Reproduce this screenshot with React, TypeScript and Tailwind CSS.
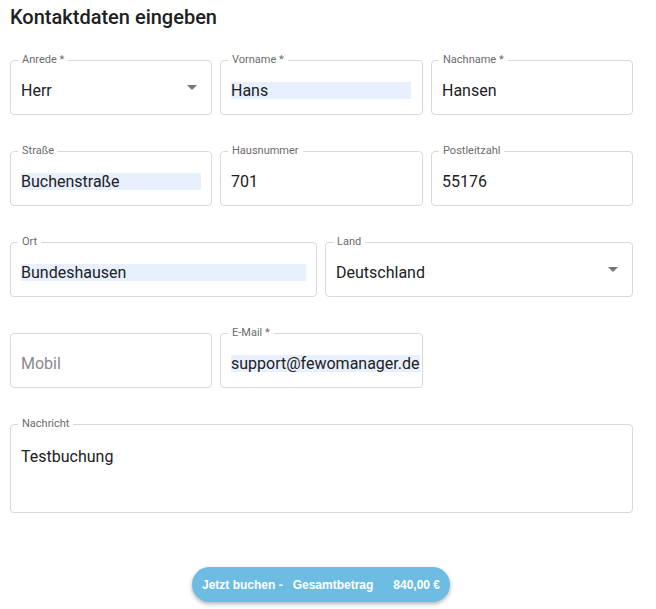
import React from "react";

function Field({ label, value, w, highlight, placeholder, select, hlw }: { label?: string; value?: string; w: string; highlight?: boolean; placeholder?: string; select?: boolean; hlw?: string }) {
  return (
    <div className={`relative h-[55px] ${w} rounded-[4px] border border-[#d9d9d9] flex items-center px-[10px] pt-[6px]`}>
      {label && (
        <span className="absolute -top-[8px] left-[7px] bg-white px-[4px] text-[11px] leading-[14px] text-[#6b6b6b]">{label}</span>
      )}
      {placeholder ? (
        <span className="text-[16px] text-[#8a8a8a]">{placeholder}</span>
      ) : (
        <span className={`text-[16px] leading-[17px] text-[#212121] ${highlight ? "bg-[#e8f0fe]" : ""} ${hlw ?? ""}`}>{value}</span>
      )}
      {select && (
        <span className="absolute right-[14px] top-[24px] w-0 h-0 border-l-[5px] border-r-[5px] border-t-[5px] border-l-transparent border-r-transparent border-t-[#757575]" />
      )}
    </div>
  );
}

export default function App() {
  return (
    <div className="w-[656px] h-[609px] bg-white font-[Roboto,sans-serif] px-[10px] relative">
      <h1 className="pt-[5px] text-[20px] leading-[24px] font-medium text-[#212121]">Kontaktdaten eingeben</h1>
      <div className="mt-[31px] flex flex-col gap-[36px]">
        <div className="flex gap-[8px]">
          <Field w="w-[202px]" label="Anrede *" value="Herr" select />
          <Field w="w-[203px]" label="Vorname *" value="Hans" highlight hlw="w-[180px]" />
          <Field w="w-[202px]" label="Nachname *" value="Hansen" />
        </div>
        <div className="flex gap-[8px]">
          <Field w="w-[202px]" label="Straße" value="Buchenstraße" highlight hlw="w-[180px]" />
          <Field w="w-[203px]" label="Hausnummer" value="701" />
          <Field w="w-[202px]" label="Postleitzahl" value="55176" />
        </div>
        <div className="flex gap-[8px]">
          <Field w="w-[307px]" label="Ort" value="Bundeshausen" highlight hlw="w-[285px]" />
          <Field w="w-[308px]" label="Land" value="Deutschland" select />
        </div>
        <div className="flex gap-[8px]">
          <Field w="w-[202px]" placeholder="Mobil" />
          <Field w="w-[203px]" label="E-Mail *" value="support@fewomanager.de" highlight />
        </div>
        <div className="relative h-[89px] w-[623px] rounded-[4px] border border-[#d9d9d9] px-[10px] pt-[20px]">
          <span className="absolute -top-[8px] left-[7px] bg-white px-[4px] text-[11px] leading-[14px] text-[#6b6b6b]">Nachricht</span>
          <span className="text-[16px] text-[#212121]">Testbuchung</span>
        </div>
      </div>
      <div className="mt-[54px] flex">
        <button className="ml-[182px] h-[35px] w-[258px] rounded-full bg-[#6dbce4] shadow-[0_2px_4px_rgba(0,0,0,0.3)] text-white text-[12px] font-bold font-[Liberation_Sans,Arial,sans-serif] whitespace-pre">
          Jetzt buchen -   Gesamtbetrag      840,00 €
        </button>
      </div>
    </div>
  );
}
